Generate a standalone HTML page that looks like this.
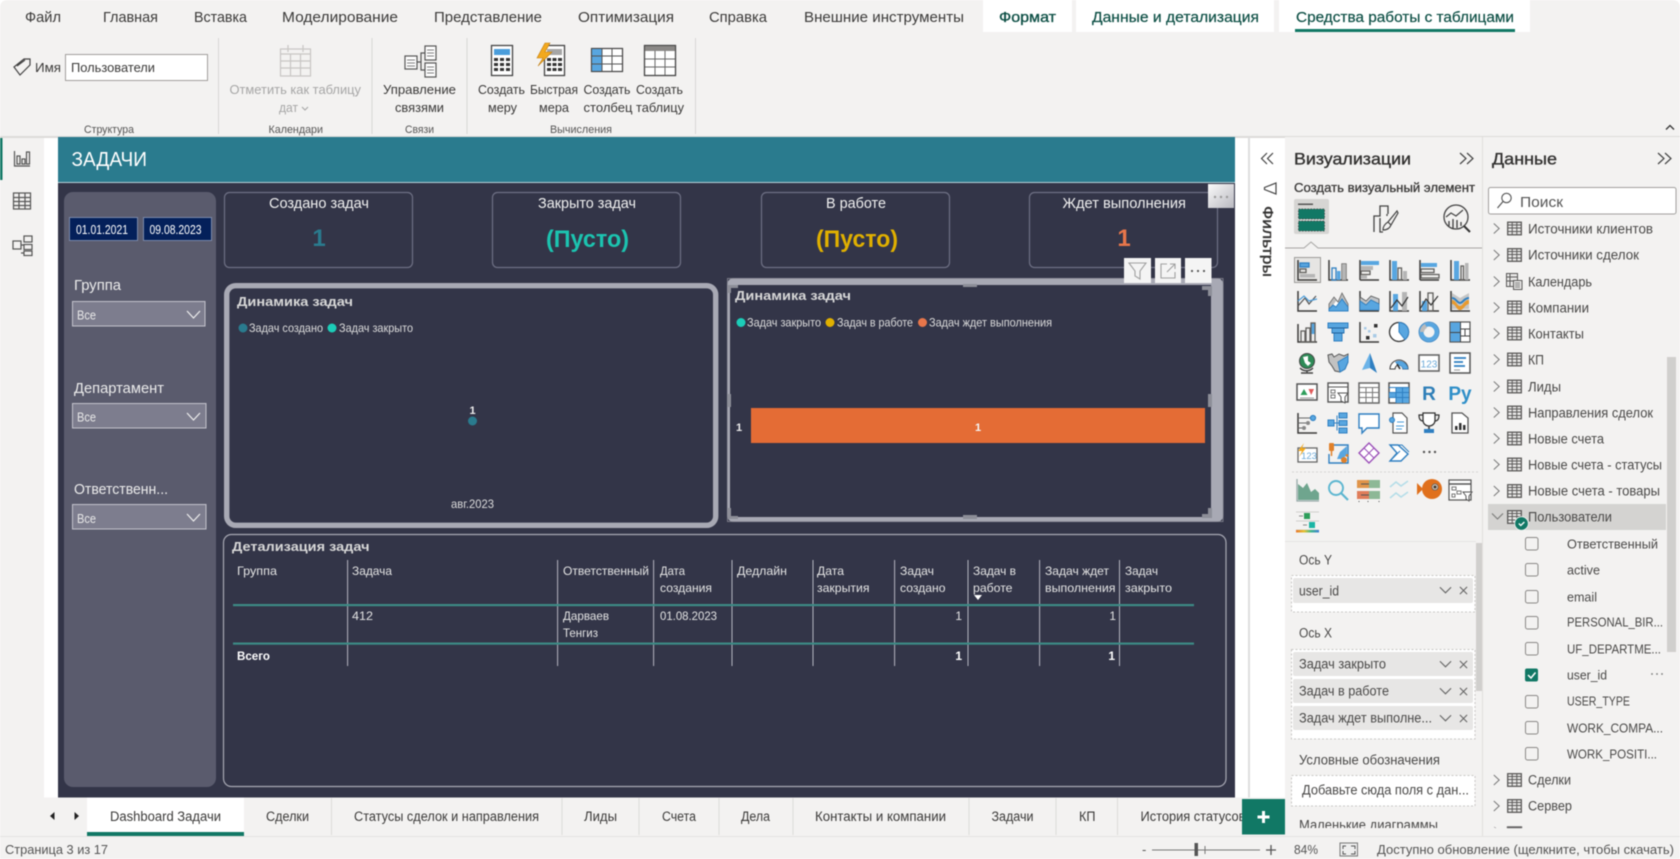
<!DOCTYPE html>
<html lang="ru">
<head>
<meta charset="utf-8">
<title>Power BI</title>
<style>
html,body{margin:0;padding:0;width:1680px;height:859px;overflow:hidden;background:#fff}
svg{display:block;filter:blur(.45px)}
text{font-family:"Liberation Sans","Noto Sans CJK SC",sans-serif;font-size:13px;fill:#323130}
.tab{font-size:15px;fill:#3b3a39}
.tabg{font-size:15px;fill:#0d4f45}
.rb{font-size:13px;fill:#3b3a39;transform:translateY(-.8px)}
.dis{font-size:13px;fill:#a6a6a6;transform:translateY(-.8px)}
.grp{font-size:11px;fill:#555}
.ct{font-size:15px;fill:#f0f0f0}
.lb{font-size:15px;fill:#ececec}
.vs{font-size:13px;fill:#ddd}
.dt{font-size:12.5px;fill:#fff}
.bt{font-size:13px;font-weight:700;fill:#d8d8d8;transform:translateY(-.8px)}
.lg{font-size:12px;fill:#dcdcdc}
.tb{font-size:12px;fill:#e4e4e4;transform:translateY(-.8px)}
.tbb{font-size:12px;font-weight:700;fill:#fff;transform:translateY(-.8px)}
.pg{font-size:13.5px;fill:#3b3a39;transform:translateY(-.8px)}
.st{font-size:13px;fill:#555}
.h{font-size:17px;fill:#323130;stroke:#323130;stroke-width:.35px}
.sub{font-size:13px;fill:#3b3a39;stroke:#3b3a39;stroke-width:.3px}
.l{font-size:13.5px;fill:#4a4948;transform:translateY(-.7px)}
.f{font-size:13px;fill:#4a4948;transform:translateY(-.7px)}
.ic{fill:none;stroke:#605e5c;stroke-width:1.3}
.icd{fill:none;stroke:#3b3a39;stroke-width:1.5}
.bl{fill:#58a6e0}
.bs{fill:none;stroke:#2f7fc1;stroke-width:1.3}
.gr{fill:#b5b5b5}
</style>
</head>
<body>
<svg width="1680" height="859" viewBox="0 0 1680 859" xmlns="http://www.w3.org/2000/svg">
<defs>
<symbol id="tbl" viewBox="0 0 15 14"><rect x=".7" y=".7" width="13.6" height="12.6" fill="#e9e8e7" stroke="#5a5958" stroke-width="1.3"/><path d="M.7 3.5H14.3M.7 6.5H14.3M.7 10H14.3M5.2 .7V13.3M9.8 .7V13.3" stroke="#5a5958" stroke-width="1" fill="none"/></symbol>
<symbol id="chv" viewBox="0 0 10 14"><path d="M2 1.5L8 7L2 12.5" fill="none" stroke="#777" stroke-width="1.1"/></symbol>
<symbol id="down" viewBox="0 0 14 8"><path d="M1 1L7 7L13 1" fill="none" stroke="#666" stroke-width="1.2"/></symbol>
<symbol id="x" viewBox="0 0 10 10"><path d="M1 1L9 9M9 1L1 9" fill="none" stroke="#666" stroke-width="1.2"/></symbol>
</defs>

<rect width="1680" height="859" fill="#fff"/>

<!-- ribbon -->
<path d="M0 8Q0 0 8 0H1672Q1680 0 1680 8V136H0Z" fill="#f3f2f1"/>
<rect x="0" y="136" width="1680" height="2" fill="#dcdbd9"/>
<text class="tab" x="25" y="22" textLength="36" lengthAdjust="spacingAndGlyphs">Файл</text>
<text class="tab" x="103" y="22" textLength="55" lengthAdjust="spacingAndGlyphs">Главная</text>
<text class="tab" x="194" y="22" textLength="53" lengthAdjust="spacingAndGlyphs">Вставка</text>
<text class="tab" x="282" y="22" textLength="116" lengthAdjust="spacingAndGlyphs">Моделирование</text>
<text class="tab" x="434" y="22" textLength="108" lengthAdjust="spacingAndGlyphs">Представление</text>
<text class="tab" x="578" y="22" textLength="96" lengthAdjust="spacingAndGlyphs">Оптимизация</text>
<text class="tab" x="709" y="22" textLength="58" lengthAdjust="spacingAndGlyphs">Справка</text>
<text class="tab" x="804" y="22" textLength="160" lengthAdjust="spacingAndGlyphs">Внешние инструменты</text>
<rect x="983" y="0" width="89" height="32" fill="#fff"/>
<rect x="1076" y="0" width="198" height="32" fill="#fff"/>
<rect x="1279" y="0" width="251" height="32" fill="#fff"/>
<text class="tabg" x="999" y="22" textLength="57" lengthAdjust="spacingAndGlyphs" style="stroke:#0d4f45;stroke-width:.35px">Формат</text>
<text class="tabg" x="1092" y="22" textLength="167" lengthAdjust="spacingAndGlyphs" style="stroke:#0d4f45;stroke-width:.2px">Данные и детализация</text>
<text class="tabg" x="1296" y="22" textLength="218" lengthAdjust="spacingAndGlyphs" style="stroke:#0d4f45;stroke-width:.2px">Средства работы с таблицами</text>
<rect x="1295" y="29" width="220" height="3" fill="#117865"/>
<path d="M1666 129.5L1670 125.5L1674 129.5" fill="none" stroke="#333" stroke-width="1.3"/>

<!-- ribbon seps -->
<path d="M218.5 38V134M372 38V134M467 38V134M695.5 38V134" stroke="#d8d7d5" stroke-width="1"/>

<!-- name -->
<path d="M14 67L24 59H30V65L20 75Z M17 66L25 60" fill="none" stroke="#444" stroke-width="1.2"/>
<text class="rb" x="35" y="73" textLength="26" lengthAdjust="spacingAndGlyphs">Имя</text>
<rect x="65.5" y="54.5" width="142" height="26" fill="#fff" stroke="#a19f9d"/>
<text class="rb" x="71" y="73" textLength="84" lengthAdjust="spacingAndGlyphs">Пользователи</text>
<text class="grp" x="84" y="133" textLength="50" lengthAdjust="spacingAndGlyphs">Структура</text>

<!-- calendar -->
<g fill="none" stroke="#c8c6c4" stroke-width="1.2">
<rect x="280.5" y="49" width="30" height="27"/>
<path d="M280.5 54H310.5M280.5 61H310.5M280.5 68H310.5M290.5 54V76M300.5 54V76M288 45V52M303 45V52"/>
</g>
<text class="dis" x="229.5" y="95" textLength="131.5" lengthAdjust="spacingAndGlyphs">Отметить как таблицу</text>
<text class="dis" x="279" y="113" textLength="19" lengthAdjust="spacingAndGlyphs">дат</text>
<path d="M302 107L305 110L308 107" fill="none" stroke="#a6a6a6" stroke-width="1.1"/>
<text class="grp" x="268.5" y="133" textLength="54.5" lengthAdjust="spacingAndGlyphs">Календари</text>

<!-- relations -->
<g fill="#fff" stroke="#555" stroke-width="1.2">
<rect x="405" y="56" width="12" height="13"/>
<rect x="425" y="46" width="11" height="14"/>
<rect x="425" y="63" width="11" height="14"/>
<path d="M417 62H421V53H425M421 62V70H425" fill="none"/>
<path d="M407 60H415M407 63H415M407 66H415M427 50H434M427 53H434M427 56H434M427 67H434M427 70H434M427 73H434" stroke-width=".8"/>
</g>
<text class="rb" x="383" y="95" textLength="73" lengthAdjust="spacingAndGlyphs">Управление</text>
<text class="rb" x="395" y="113" textLength="49" lengthAdjust="spacingAndGlyphs">связями</text>
<text class="grp" x="405" y="133" textLength="29" lengthAdjust="spacingAndGlyphs">Связи</text>

<!-- calculator icons -->
<rect x="491.5" y="45.5" width="21" height="30" fill="#fff" stroke="#444" stroke-width="1.3"/>
<rect x="494" y="49" width="16" height="6" fill="#4a9ddb"/>
<g fill="#333"><rect x="494" y="58" width="4" height="3"/><rect x="500" y="58" width="4" height="3"/><rect x="506" y="58" width="4" height="3"/><rect x="494" y="63" width="4" height="3"/><rect x="500" y="63" width="4" height="3"/><rect x="506" y="63" width="4" height="3"/><rect x="494" y="68" width="4" height="3"/><rect x="500" y="68" width="4" height="3"/><rect x="506" y="68" width="4" height="3"/></g>
<rect x="544.5" y="45.5" width="20" height="30" fill="#fff" stroke="#444" stroke-width="1.3"/>
<rect x="547" y="49" width="15" height="6" fill="#a6a6a6"/>
<g fill="#333"><rect x="547" y="58" width="4" height="3"/><rect x="552.5" y="58" width="4" height="3"/><rect x="558" y="58" width="4" height="3"/><rect x="547" y="63" width="4" height="3"/><rect x="552.5" y="63" width="4" height="3"/><rect x="558" y="63" width="4" height="3"/><rect x="547" y="68" width="4" height="3"/><rect x="552.5" y="68" width="4" height="3"/><rect x="558" y="68" width="4" height="3"/></g>
<path d="M545 43L537 58H543L538 66L552 52H545L550 43Z" fill="#f2a91e" stroke="#c17d0f" stroke-width=".6"/>
<rect x="591.5" y="48.5" width="31" height="23" fill="#fff" stroke="#444" stroke-width="1.2"/>
<rect x="592" y="49" width="10" height="22" fill="#58a6e0"/>
<path d="M602 49V71M612 49V71M592 56H622M592 64H622" stroke="#555" stroke-width="1" fill="none"/>
<rect x="644.5" y="45.5" width="31" height="30" fill="#fff" stroke="#444" stroke-width="1.3"/>
<rect x="645" y="46" width="30" height="5" fill="#8a8886"/>
<path d="M655 51V75M665 51V75M645 59H675M645 67H675" stroke="#666" stroke-width="1" fill="none"/>

<text class="rb" x="478" y="95" textLength="47" lengthAdjust="spacingAndGlyphs">Создать</text>
<text class="rb" x="488" y="113" textLength="29" lengthAdjust="spacingAndGlyphs">меру</text>
<text class="rb" x="530" y="95" textLength="48" lengthAdjust="spacingAndGlyphs">Быстрая</text>
<text class="rb" x="539" y="113" textLength="30" lengthAdjust="spacingAndGlyphs">мера</text>
<text class="rb" x="583.5" y="95" textLength="47" lengthAdjust="spacingAndGlyphs">Создать</text>
<text class="rb" x="583.5" y="113" textLength="49" lengthAdjust="spacingAndGlyphs">столбец</text>
<text class="rb" x="636" y="95" textLength="47" lengthAdjust="spacingAndGlyphs">Создать</text>
<text class="rb" x="636" y="113" textLength="48" lengthAdjust="spacingAndGlyphs">таблицу</text>
<text class="grp" x="550" y="133" textLength="62" lengthAdjust="spacingAndGlyphs">Вычисления</text>

<!-- left rail -->
<rect x="0" y="138" width="44" height="660" fill="#f3f2f1"/>
<rect x="0" y="138" width="2.5" height="42" fill="#117865"/>
<g fill="none" stroke="#555" stroke-width="1.2">
<path d="M14.5 151V166H30"/><rect x="17" y="156" width="3" height="8"/><rect x="22" y="159" width="3" height="5"/><rect x="26.5" y="152" width="3" height="12"/>
<rect x="13.5" y="193" width="17" height="16"/><path d="M13.5 197.5H30.5M13.5 201.5H30.5M13.5 205.5H30.5M19 193V209M25 193V209"/>
<rect x="13" y="241" width="8" height="8"/><rect x="24" y="236" width="8" height="6"/><rect x="24" y="244.5" width="8" height="5"/><rect x="24" y="251" width="8" height="4.5"/><path d="M21 245H24M21 253H24"/>
</g>

<!-- canvas -->
<rect x="58" y="137" width="1177" height="46" fill="#2a7b8e"/>
<rect x="58" y="182" width="1177" height="1" fill="#b6cfd6"/>
<text x="71.5" y="166" textLength="75.5" lengthAdjust="spacingAndGlyphs" style="font-size:20px;fill:#fff">ЗАДАЧИ</text>
<rect x="58" y="183" width="1177" height="614.5" fill="#333548"/>

<!-- slicer panel -->
<rect x="64" y="192" width="152" height="595" rx="9" fill="#5a5b6d"/>
<rect x="69.5" y="217.5" width="68" height="23" fill="#04205a" stroke="#7a88a8"/>
<rect x="143.5" y="217.5" width="68" height="23" fill="#04205a" stroke="#7a88a8"/>
<text class="dt" x="76" y="234" textLength="52" lengthAdjust="spacingAndGlyphs">01.01.2021</text>
<text class="dt" x="149.5" y="234" textLength="52" lengthAdjust="spacingAndGlyphs">09.08.2023</text>
<text class="lb" x="74" y="290" textLength="47" lengthAdjust="spacingAndGlyphs">Группа</text>
<rect x="72.5" y="301.5" width="132.5" height="24.5" fill="#7d7d8e" stroke="#c3c3cc"/>
<text class="dt" x="77" y="319.5" textLength="19" lengthAdjust="spacingAndGlyphs" style="fill:#e8e8e8">Все</text>
<path d="M187 311L193.5 318L200 311" fill="none" stroke="#eee" stroke-width="1.2"/>
<text class="lb" x="74" y="393" textLength="90" lengthAdjust="spacingAndGlyphs">Департамент</text>
<rect x="72.5" y="403.5" width="133.5" height="24.5" fill="#7d7d8e" stroke="#c3c3cc"/>
<text class="dt" x="77" y="421.5" textLength="19" lengthAdjust="spacingAndGlyphs" style="fill:#e8e8e8">Все</text>
<path d="M187 413L193.5 420L200 413" fill="none" stroke="#eee" stroke-width="1.2"/>
<text class="lb" x="74" y="494" textLength="94" lengthAdjust="spacingAndGlyphs">Ответственн...</text>
<rect x="72.5" y="504.5" width="133.5" height="24.5" fill="#7d7d8e" stroke="#c3c3cc"/>
<text class="dt" x="77" y="523" textLength="19" lengthAdjust="spacingAndGlyphs" style="fill:#e8e8e8">Все</text>
<path d="M187 514L193.5 521L200 514" fill="none" stroke="#eee" stroke-width="1.2"/>

<!-- cards -->
<g fill="#333548" stroke="#6e7084" stroke-width="1.2">
<rect x="224.5" y="192.5" width="188" height="75" rx="5"/>
<rect x="492.5" y="192.5" width="188" height="75" rx="5"/>
<rect x="761.5" y="192.5" width="188" height="75" rx="5"/>
<rect x="1029.5" y="192.5" width="188" height="75" rx="5"/>
</g>
<text class="ct" x="269" y="208" textLength="100" lengthAdjust="spacingAndGlyphs">Создано задач</text>
<text class="ct" x="538" y="208" textLength="98" lengthAdjust="spacingAndGlyphs">Закрыто задач</text>
<text class="ct" x="826" y="208" textLength="60" lengthAdjust="spacingAndGlyphs">В работе</text>
<text class="ct" x="1062.5" y="208" textLength="123.5" lengthAdjust="spacingAndGlyphs">Ждет выполнения</text>
<text x="319" y="246" text-anchor="middle" style="font-size:24px;font-weight:700;fill:#2a7b8e">1</text>
<text x="546" y="247" textLength="83" lengthAdjust="spacingAndGlyphs" style="font-size:24px;font-weight:700;fill:#1cc4b0">(Пусто)</text>
<text x="816" y="247" textLength="82" lengthAdjust="spacingAndGlyphs" style="font-size:24px;font-weight:700;fill:#e0b000">(Пусто)</text>
<text x="1124" y="246" text-anchor="middle" style="font-size:24px;font-weight:700;fill:#e8764a">1</text>

<!-- top-right more -->
<defs><linearGradient id="gm" x1="0" y1="0" x2="1" y2="1"><stop offset="0" stop-color="#fafafa"/><stop offset="1" stop-color="#b9b9c0"/></linearGradient></defs>
<rect x="1208" y="184" width="26" height="24" fill="url(#gm)"/>
<g fill="#999"><circle cx="1215" cy="197" r="1.2"/><circle cx="1221" cy="197" r="1.2"/><circle cx="1227" cy="197" r="1.2"/></g>

<!-- left chart -->
<rect x="226.7" y="285.7" width="489" height="239.6" rx="9" fill="#333548" stroke="#a8a9b4" stroke-width="5.4"/>
<text class="bt" x="237" y="307" textLength="116" lengthAdjust="spacingAndGlyphs">Динамика задач</text>
<circle cx="243" cy="328" r="4.5" fill="#2a7b8e"/>
<text class="lg" x="249" y="332" textLength="74" lengthAdjust="spacingAndGlyphs">Задач создано</text>
<circle cx="332" cy="328" r="4.5" fill="#1ccdb8"/>
<text class="lg" x="339" y="332" textLength="74" lengthAdjust="spacingAndGlyphs">Задач закрыто</text>
<text x="472.5" y="414" text-anchor="middle" style="font-size:11px;font-weight:700;fill:#eee">1</text>
<circle cx="472.5" cy="421" r="4.5" fill="#2a7b8e"/>
<text class="lg" x="451" y="508" textLength="43" lengthAdjust="spacingAndGlyphs">авг.2023</text>

<!-- right chart -->
<rect x="727" y="278" width="496.5" height="244" rx="7" fill="#a8a9b4"/>
<rect x="730" y="285" width="481" height="232" fill="#333548"/>
<rect x="727.5" y="278.5" width="495.5" height="243" fill="none" stroke="#8a8b96" stroke-width=".8"/>
<g fill="#8d8e98">
<rect x="963" y="284" width="14" height="3"/><rect x="963" y="515" width="14" height="4"/>
<rect x="727" y="394" width="4" height="13"/><rect x="1208" y="394" width="4" height="13"/>
<path d="M728 285H738V288H731V293H728ZM1202 286H1212V296H1208V290H1202ZM728 508H731V516H738V519H728ZM1208 508H1212V518H1202V514H1208Z"/>
</g>
<text class="bt" x="735" y="301" textLength="116" lengthAdjust="spacingAndGlyphs">Динамика задач</text>
<circle cx="741" cy="322.5" r="4.5" fill="#1ccdb8"/>
<text class="lg" x="747" y="326.5" textLength="74" lengthAdjust="spacingAndGlyphs">Задач закрыто</text>
<circle cx="830" cy="322.5" r="4.5" fill="#e0b000"/>
<text class="lg" x="837" y="326.5" textLength="76" lengthAdjust="spacingAndGlyphs">Задач в работе</text>
<circle cx="922.5" cy="322.5" r="4.5" fill="#e8764a"/>
<text class="lg" x="929" y="326.5" textLength="123" lengthAdjust="spacingAndGlyphs">Задач ждет выполнения</text>
<rect x="751" y="408" width="454" height="35" fill="#e46c35"/>
<text x="739" y="431" text-anchor="middle" style="font-size:11px;font-weight:700;fill:#eee">1</text>
<text x="978" y="431" text-anchor="middle" style="font-size:11px;font-weight:700;fill:#f5f5f5">1</text>

<!-- visual header -->
<rect x="1124" y="258" width="27" height="25" fill="#f4f4f4"/>
<rect x="1155" y="258" width="26" height="25" fill="#f4f4f4"/>
<rect x="1185" y="258" width="26.5" height="25" fill="#f4f4f4"/>
<path d="M1129 263H1146L1140 271V279L1135 276V271Z" fill="none" stroke="#a0a0a0" stroke-width="1.1"/>
<path d="M1167 264H1161V278H1175V272M1167 272L1175 264M1170 264H1175V269" fill="none" stroke="#a0a0a0" stroke-width="1.1"/>
<g fill="#555"><circle cx="1192" cy="271" r="1.1"/><circle cx="1198" cy="271" r="1.1"/><circle cx="1204" cy="271" r="1.1"/></g>

<!-- table -->
<rect x="223.5" y="534.5" width="1002.5" height="252" rx="8" fill="#333548" stroke="#a8a9b4" stroke-width="1.2"/>
<text class="bt" x="232" y="552" textLength="137.5" lengthAdjust="spacingAndGlyphs">Детализация задач</text>
<path d="M347.6 560V666M557.6 560V666M653.6 560V666M732 560V666M813 560V666M894.6 560V666M968 560V666M1039.6 560V666M1119.5 560V666" stroke="#b5b5c0" stroke-width="1"/>
<rect x="233" y="604" width="961" height="2.2" fill="#3d8a85"/>
<rect x="233" y="642.5" width="961" height="2.2" fill="#3d8a85"/>
<text class="tb" x="237" y="576" textLength="40" lengthAdjust="spacingAndGlyphs">Группа</text>
<text class="tb" x="352" y="576" textLength="40" lengthAdjust="spacingAndGlyphs">Задача</text>
<text class="tb" x="563" y="576" textLength="86" lengthAdjust="spacingAndGlyphs">Ответственный</text>
<text class="tb" x="660" y="576" textLength="25" lengthAdjust="spacingAndGlyphs">Дата</text>
<text class="tb" x="660" y="593" textLength="52" lengthAdjust="spacingAndGlyphs">создания</text>
<text class="tb" x="737" y="576" textLength="50" lengthAdjust="spacingAndGlyphs">Дедлайн</text>
<text class="tb" x="817" y="576" textLength="27" lengthAdjust="spacingAndGlyphs">Дата</text>
<text class="tb" x="817" y="593" textLength="52.5" lengthAdjust="spacingAndGlyphs">закрытия</text>
<text class="tb" x="900" y="576" textLength="34" lengthAdjust="spacingAndGlyphs">Задач</text>
<text class="tb" x="900" y="593" textLength="45.5" lengthAdjust="spacingAndGlyphs">создано</text>
<text class="tb" x="973" y="576" textLength="43" lengthAdjust="spacingAndGlyphs">Задач в</text>
<text class="tb" x="973" y="593" textLength="39.5" lengthAdjust="spacingAndGlyphs">работе</text>
<path d="M974 595H982L978 600Z" fill="#fff"/>
<text class="tb" x="1045" y="576" textLength="64" lengthAdjust="spacingAndGlyphs">Задач ждет</text>
<text class="tb" x="1045" y="593" textLength="70.5" lengthAdjust="spacingAndGlyphs">выполнения</text>
<text class="tb" x="1125" y="576" textLength="33" lengthAdjust="spacingAndGlyphs">Задач</text>
<text class="tb" x="1125" y="593" textLength="47" lengthAdjust="spacingAndGlyphs">закрыто</text>
<text class="tb" x="352" y="621" textLength="21" lengthAdjust="spacingAndGlyphs">412</text>
<text class="tb" x="563" y="621" textLength="46" lengthAdjust="spacingAndGlyphs">Дарваев</text>
<text class="tb" x="563" y="638" textLength="35" lengthAdjust="spacingAndGlyphs">Тенгиз</text>
<text class="tb" x="660" y="621" textLength="57" lengthAdjust="spacingAndGlyphs">01.08.2023</text>
<text class="tb" x="962" y="621" text-anchor="end">1</text>
<text class="tb" x="1116" y="621" text-anchor="end">1</text>
<text class="tbb" x="237" y="661" textLength="33" lengthAdjust="spacingAndGlyphs">Всего</text>
<text class="tbb" x="962" y="661" text-anchor="end">1</text>
<text class="tbb" x="1115" y="661" text-anchor="end">1</text>

<!-- filter pane -->
<rect x="1248" y="137" width="2" height="661" fill="#dedede"/>
<path d="M1267 153L1261.5 158.5L1267 164M1273 153L1267.5 158.5L1273 164" fill="none" stroke="#444" stroke-width="1.2"/>
<path d="M1276 183V194L1264.5 189.5V187.5Z" fill="none" stroke="#444" stroke-width="1.2"/>
<text transform="translate(1263,206) rotate(90)" textLength="71" lengthAdjust="spacingAndGlyphs" style="font-size:15px;fill:#323130;stroke:#323130;stroke-width:.35px">Фильтры</text>

<!-- viz pane -->
<rect x="1285" y="137" width="197" height="699" fill="#f3f2f1"/>
<rect x="1482" y="137" width="1" height="699" fill="#e1dfdd"/>
<text class="h" x="1294" y="164.5" textLength="117" lengthAdjust="spacingAndGlyphs">Визуализации</text>
<path d="M1460 153L1466 158.5L1460 164M1467 153L1473 158.5L1467 164" fill="none" stroke="#444" stroke-width="1.2"/>
<text class="sub" x="1294" y="192" textLength="181" lengthAdjust="spacingAndGlyphs">Создать визуальный элемент</text>
<rect x="1294" y="199" width="35" height="35" rx="2" fill="#d6d5d3"/>
<rect x="1298" y="203.5" width="15" height="1.5" fill="#555"/>
<rect x="1298.5" y="209" width="26" height="10" fill="#117865" stroke="#444" stroke-dasharray="1.5 1.5" stroke-width=".8"/>
<rect x="1298.5" y="221" width="26" height="10" fill="#117865" stroke="#444" stroke-dasharray="1.5 1.5" stroke-width=".8"/>
<!-- format icon -->
<path d="M1374 232V216H1380V206H1388V214M1380 218V232H1383M1387 216V214" fill="none" stroke="#444" stroke-width="1.3"/>
<path d="M1397 211L1388 222L1391 225L1398 213ZM1388 222Q1383 225 1383 230Q1389 230 1391 225" fill="none" stroke="#444" stroke-width="1.2"/>
<!-- analytics icon -->
<circle cx="1456" cy="217" r="12" fill="none" stroke="#444" stroke-width="1.3"/>
<path d="M1446 217L1451 213L1456 216L1463 210" fill="none" stroke="#444" stroke-width="1.2"/>
<path d="M1449 221V226M1453 219V228M1457 220V228M1461 222V226" stroke="#444" stroke-width="1.4"/>
<path d="M1464 226L1470 232" stroke="#333" stroke-width="2"/>
<path d="M1285 248H1304L1311 242L1318 248H1482" fill="#f3f2f1" stroke="#a6a5a3" stroke-width="1"/>

<!-- viz gallery -->
<rect x="1294.5" y="257.5" width="26" height="25" fill="#e6e5e3" stroke="#9c9b99"/>
<!-- row 1 -->
<g transform="translate(1297,260)"><path class="icd" d="M1 0V20H20"/><rect class="bl" x="3" y="3" width="9" height="4"/><rect class="bs" x="3" y="3" width="9" height="4"/><rect class="ic" x="3" y="9" width="6" height="3.5"/><rect class="gr" x="3" y="14" width="15" height="3.5"/></g>
<g transform="translate(1328,260)"><path class="icd" d="M1 0V20H20"/><rect class="bs" x="4" y="8" width="4" height="12"/><rect class="bl" x="9" y="11" width="3.5" height="9"/><rect class="ic" x="14" y="4" width="4" height="16"/><rect class="gr" x="14" y="4" width="4" height="16"/></g>
<g transform="translate(1359,260)"><path class="icd" d="M1 0V20"/><path class="icd" d="M1 20H20"/><rect class="bl" x="2" y="1" width="18" height="4"/><rect class="gr" x="2" y="6" width="12" height="4"/><rect class="ic" x="2" y="11" width="9" height="3.5"/><rect class="gr" x="2" y="15.5" width="6" height="3"/></g>
<g transform="translate(1389,260)"><path class="icd" d="M1 0V20H20"/><rect class="bl" x="3" y="1" width="5" height="19"/><rect class="ic" x="9" y="8" width="3.5" height="12"/><rect class="gr" x="14" y="11" width="4" height="9"/></g>
<g transform="translate(1419,260)"><path class="icd" d="M1 0V20"/><path class="icd" d="M1 20H20"/><rect class="bl" x="2" y="3" width="16" height="4"/><rect class="ic" x="2" y="9" width="13" height="3.5"/><rect class="ic" x="2" y="14.5" width="18" height="3.5"/></g>
<g transform="translate(1450,260)"><path class="icd" d="M1 0V20H20"/><rect class="bl" x="4" y="1" width="5" height="19"/><rect class="ic" x="11" y="6" width="2.5" height="14"/><rect class="gr" x="15" y="3" width="3.5" height="17"/></g>
<!-- row 2 -->
<g transform="translate(1297,291)"><path class="icd" d="M1 0V20H20"/><path d="M1 15L8 7L12 13L19 5" fill="none" stroke="#555" stroke-width="1.2"/><path d="M1 10L7 5L12 10L20 8" fill="none" stroke="#4a9ddb" stroke-width="1.2"/></g>
<g transform="translate(1328,291)"><path d="M1 20V13L6 6L10 11L14 2L20 13V20Z" fill="#bdbdbd" stroke="#666" stroke-width=".8"/><path d="M1 20L8 10L13 14L17 20Z" fill="#fff"/><path d="M1 20H20V16L14 8L8 16L5 14L1 18Z" fill="#58a6e0" stroke="#2f7fc1" stroke-width="1"/></g>
<g transform="translate(1359,291)"><path class="icd" d="M1 0V20H20"/><path d="M1 6L7 10L12 5L20 8V13L12 9L7 14L1 10Z" fill="#bfc3c7" stroke="#555" stroke-width=".8"/><path d="M1 10L7 14L12 9L20 13V19H1Z" fill="#58a6e0" stroke="#2f7fc1" stroke-width=".8"/></g>
<g transform="translate(1389,291)"><path class="icd" d="M1 0V20H20"/><rect class="bl" x="4" y="3" width="5" height="17"/><rect class="gr" x="13" y="1" width="5" height="19"/><path d="M2 17L8 9L13 15L19 6" fill="none" stroke="#333" stroke-width="1.2"/></g>
<g transform="translate(1419,291)"><path class="icd" d="M1 0V20H20"/><rect class="bl" x="3" y="10" width="5" height="10"/><rect class="ic" x="9" y="2" width="5" height="18"/><path d="M1 18L7 8L12 14L19 5" fill="none" stroke="#333" stroke-width="1.2"/></g>
<g transform="translate(1450,291)"><path class="icd" d="M1 0V20H20"/><path d="M2 2L10 7L19 2V18H2Z" fill="#c5c5c5"/><path d="M2 9C6 9 7 15 10 15S14 9 19 9V13C15 13 14 19 10 19S6 13 2 13Z" fill="#e89a2e"/><path d="M2 7C6 7 7 12 10 12S14 7 19 7" fill="none" stroke="#2f7fc1" stroke-width="2"/></g>
<!-- row 3 -->
<g transform="translate(1297,322)"><path class="icd" d="M1 2V20H20"/><rect class="ic" x="4" y="9" width="4" height="11"/><rect class="ic" x="9" y="6" width="4" height="14"/><rect class="bl" x="14" y="1" width="4" height="11"/><rect class="ic" x="14" y="1" width="4" height="19"/></g>
<g transform="translate(1328,322)"><path d="M0 1H20V6H16V11H14V19H6V11H4V6H0Z" fill="#58a6e0" stroke="#2f7fc1" stroke-width="1"/><path d="M1 6H19M4 11H16" stroke="#1f5f99" stroke-width="1"/></g>
<g transform="translate(1359,322)"><path class="icd" d="M1 0V20H20"/><rect x="15" y="2" width="3.5" height="3.5" fill="#333"/><rect x="7" y="14" width="3.5" height="3.5" fill="#333"/><rect x="5" y="5" width="2.5" height="2.5" fill="#a9cbe6"/><rect x="9" y="8" width="2.5" height="2.5" fill="#a9cbe6"/><rect x="14" y="12" width="3.5" height="3.5" fill="#a9cbe6"/></g>
<g transform="translate(1389,322)"><circle cx="10" cy="10" r="9.5" fill="#fff" stroke="#333" stroke-width="1.3"/><path d="M10 10V.5A9.5 9.5 0 0 1 16 17.5Z" fill="#58a6e0" stroke="#2f7fc1"/></g>
<g transform="translate(1419,322)"><circle cx="10" cy="10" r="7.5" fill="none" stroke="#58a6e0" stroke-width="4"/><circle cx="10" cy="10" r="10" fill="none" stroke="#2f7fc1" stroke-width=".8"/><path d="M1 10A9 9 0 0 1 6 2L8 6A5 5 0 0 0 5 10Z" fill="#bbb"/></g>
<g transform="translate(1450,322)"><rect x="0" y="0" width="20" height="20" fill="#fff" stroke="#555" stroke-width="1.2"/><rect x=".5" y=".5" width="10" height="10" fill="#58a6e0"/><rect x=".5" y="10.5" width="10" height="9" fill="#58a6e0"/><path d="M10.5 0V20M0 10.5H10.5M10.5 7H20M10.5 14H20M15 7V14" stroke="#444" fill="none"/></g>
<!-- row 4 -->
<g transform="translate(1297,353)"><circle cx="10" cy="8" r="7.5" fill="#2e8b57" stroke="#444"/><path d="M6 4L11 3V8L14 10L11 13L8 10Z" fill="#fff"/><path d="M3 15A9 9 0 0 0 16 15M10 17V20M4 20H16" fill="none" stroke="#444" stroke-width="1.4"/></g>
<g transform="translate(1328,353)"><path d="M0 2L4 1L6 4L11 1L16 3L20 1V9L17 16L12 19L7 18L4 13L1 9Z" fill="#c2c2c2" stroke="#555"/><path d="M10 9L20 3V9L17 16L12 19Z" fill="#58a6e0" stroke="#2f7fc1"/></g>
<g transform="translate(1359,353)"><path d="M11 0L18 20L11 15Z" fill="#2f7fc1"/><path d="M11 0L3 17L11 15Z" fill="#6bb3e8"/></g>
<g transform="translate(1389,353)"><path d="M1 16A9 9 0 0 1 19 16H14A4 4 0 0 0 6 16Z" fill="#fff" stroke="#444" stroke-width="1.1"/><path d="M6.5 9A9 9 0 0 1 19 16H14A4 4 0 0 0 9.5 12.5Z" fill="#58a6e0" stroke="#2f7fc1" stroke-width=".6"/><path d="M11 16L8 11" stroke="#333" stroke-width="1.6"/></g>
<g transform="translate(1419,353)"><rect x="0" y="2" width="20" height="16" fill="#fff" stroke="#666" stroke-width="1.6"/><text x="10" y="14.5" text-anchor="middle" style="font-size:10px;fill:#6caad8">123</text></g>
<g transform="translate(1450,353)"><rect x="0" y="0" width="20" height="20" fill="#fff" stroke="#555" stroke-width="1.5"/><path d="M4 5H16M4 9H13M4 13H15" stroke="#2f7fc1" stroke-width="1.8"/><path d="M4 17H10" stroke="#999" stroke-width="1"/></g>
<!-- row 5 -->
<g transform="translate(1297,383)"><rect x="0" y="1" width="20" height="16" fill="#fff" stroke="#555" stroke-width="1.5"/><path d="M3.5 12L7 6L10.5 12Z" fill="#2e9e5b"/><path d="M11.5 6H17L14.2 12Z" fill="#e05a5a"/><path d="M3 15H17" stroke="#999"/></g>
<g transform="translate(1328,383)"><rect x="0" y="0" width="20" height="19" fill="#fff" stroke="#555" stroke-width="1.4"/><path d="M0 4H20" stroke="#555"/><rect x="3" y="7" width="4" height="3" fill="none" stroke="#777"/><rect x="3" y="12" width="4" height="3" fill="none" stroke="#777"/><path d="M10 10H20L17 14V20L13 18V14Z" fill="#fff" stroke="#555"/></g>
<g transform="translate(1359,383)"><rect x="0" y="0" width="20" height="20" fill="#fff" stroke="#666" stroke-width="1.5"/><path d="M0 4.5H20M0 9.5H20M0 14.5H20M7 4.5V20M13.5 4.5V20" stroke="#777" fill="none"/></g>
<g transform="translate(1389,383)"><rect x="0" y="0" width="20" height="20" fill="#fff" stroke="#555" stroke-width="1.5"/><rect x="7" y="5" width="13" height="15" fill="#58a6e0"/><rect x="0" y="9" width="20" height="5" fill="#58a6e0"/><path d="M0 4.5H20M0 9.5H20M0 14.5H20M7 4.5V20M13.5 4.5V20" stroke="#2f7fc1" fill="none"/></g>
<text x="1429" y="400" text-anchor="middle" style="font-size:19px;font-weight:700;fill:#2f7fb8">R</text>
<text x="1460" y="400" text-anchor="middle" style="font-size:19px;font-weight:700;fill:#2f8fc8">Py</text>
<!-- row 6 -->
<g transform="translate(1297,413)"><path class="icd" d="M1 0V20H20"/><path d="M1 5H14M1 10H9M1 15H5" stroke="#666" fill="none"/><circle cx="16" cy="5" r="2.6" class="bl" stroke="#2f7fc1"/><circle cx="11" cy="10" r="2" fill="#888"/><circle cx="7" cy="15" r="2" fill="#888"/></g>
<g transform="translate(1328,413)"><rect x="0" y="7" width="6" height="6" class="bl" stroke="#2f7fc1"/><rect x="11" y="0" width="8" height="5" class="bl" stroke="#2f7fc1"/><rect x="11" y="7.5" width="8" height="5" class="bl" stroke="#2f7fc1"/><rect x="11" y="15" width="8" height="5" class="bl" stroke="#2f7fc1"/><path d="M6 10H11M9 2.5V17.5" stroke="#2f7fc1" fill="none"/></g>
<g transform="translate(1359,413)"><path d="M0 1H20V15H8L3 20V15H0Z" fill="#fff" stroke="#2f7fc1" stroke-width="1.4"/></g>
<g transform="translate(1389,413)"><path d="M4 0H13L18 5V20H4Z" fill="#fff" stroke="#555" stroke-width="1.2"/><circle cx="3" cy="7" r="2.5" class="bl" stroke="#2f7fc1"/><path d="M8 9H15M7 13H15M7 16H13" stroke="#4a9ddb"/></g>
<g transform="translate(1419,413)"><path d="M4 0H16V7C16 11 13 13 10 13S4 11 4 7Z" fill="#fff" stroke="#333" stroke-width="1.3"/><path d="M4 2H0C0 7 2 8 4 8M16 2H20C20 7 18 8 16 8" fill="none" stroke="#333" stroke-width="1.2"/><rect x="9" y="13" width="2" height="3" fill="#555"/><rect x="5" y="16" width="10" height="4" fill="#2f7fc1"/></g>
<g transform="translate(1450,413)"><path d="M2 0H12L18 5V20H2Z" fill="#fff" stroke="#555" stroke-width="1.3"/><rect x="5" y="13" width="2.5" height="4" fill="#333"/><rect x="9" y="10" width="2.5" height="7" fill="#333"/><rect x="13" y="12" width="2.5" height="5" fill="#333"/></g>
<!-- row 7 -->
<g transform="translate(1297,443)"><rect x="1" y="5" width="19" height="14" fill="#fff" stroke="#666" stroke-width="1.3"/><text x="12" y="16" text-anchor="middle" style="font-size:9.5px;fill:#6caad8">123</text><path d="M7 0L1 8H5L2 14L9 5H5Z" fill="#f2a91e"/></g>
<g transform="translate(1328,443)"><path d="M4 2H20V20H1V11" fill="none" stroke="#2f7fc1" stroke-width="1.4"/><path d="M9 16L12 9L19 3V12L14 16Z" fill="#58a6e0"/><rect x="1" y="0" width="5" height="8" rx="1" fill="#e0812b"/><path d="M3.5 8V13" stroke="#e0812b" stroke-width="1.5"/><circle cx="16" cy="17" r="3" fill="#e0812b"/><circle cx="19" cy="12.5" r="1.4" fill="#e0812b"/></g>
<g transform="translate(1359,443)"><path d="M10 0L20 10L10 20L0 10Z" fill="#fff" stroke="#9b4fb8" stroke-width="1.4"/><path d="M5 5L15 15M15 5L5 15" stroke="#9b4fb8"/></g>
<g transform="translate(1389,443)"><path d="M1 2H9L19 11L12 18H1L8 10Z" fill="#fff" stroke="#2f7fc1" stroke-width="1.4"/><path d="M9 2H13L20 9M1 18L11 8" stroke="#2f7fc1" fill="none"/></g>
<g fill="#555"><circle cx="1424" cy="452" r="1.2"/><circle cx="1429.5" cy="452" r="1.2"/><circle cx="1435" cy="452" r="1.2"/></g>
<path d="M1292 472H1478" stroke="#d5d4d2" stroke-dasharray="2 2"/>
<!-- custom row -->
<g transform="translate(1296,479)"><path d="M1 0V22H23" fill="none" stroke="#9aa" stroke-width="1.3"/><path d="M2 21V5L7 9L11 4L15 13L19 10L23 14V21Z" fill="#6fa58e"/></g>
<g transform="translate(1327,479)"><circle cx="9" cy="9" r="7" fill="none" stroke="#5cb6d0" stroke-width="1.9"/><path d="M14 14L21 21" stroke="#5cb6d0" stroke-width="2.2"/></g>
<g transform="translate(1357,479)"><rect x="0" y="1" width="23" height="8" fill="#e0954a"/><rect x="12" y="1" width="11" height="8" fill="#8db896"/><rect x="0" y="12" width="23" height="8" fill="#e07d5a"/><rect x="12" y="12" width="11" height="8" fill="#8db896"/><path d="M4 5H12M4 16H12" stroke="#555"/><path d="M2 22V23M11 22V23M22 22V23" stroke="#555"/></g>
<g transform="translate(1389,479)"><path d="M1 8L7 3L12 7L19 2M1 19L7 14L12 18L19 13" fill="none" stroke="#b4dde8" stroke-width="1.5"/></g>
<g transform="translate(1417,479)"><path d="M0 4L6 10L0 16Z" fill="#e0701c"/><ellipse cx="15" cy="10" rx="10" ry="10" fill="#e0701c"/><circle cx="18" cy="8" r="3.2" fill="#c9b9a8" stroke="#555" stroke-width=".6"/><circle cx="18" cy="8" r="1.4" fill="#333"/></g>
<g transform="translate(1449,479)"><rect x="0" y="1" width="22" height="20" fill="#fff" stroke="#555" stroke-width="1.2"/><path d="M0 5H22" stroke="#555" stroke-width="1.5"/><rect x="3" y="8" width="4" height="3" fill="none" stroke="#777"/><rect x="8" y="12" width="4" height="3" fill="none" stroke="#777"/><rect x="3" y="15" width="3" height="3" fill="none" stroke="#777"/><path d="M14 13H23L20 17V22L17 20V17Z" fill="#fff" stroke="#555"/></g>
<g transform="translate(1296,511)"><path d="M0 1H23M0 10H23M0 19H23" stroke="#d0cfcd"/><rect x="8" y="2" width="6" height="6" fill="#2e9e5b"/><rect x="13" y="11" width="6" height="6" fill="#1ab5a5"/><path d="M3 5H7M7 14H11" stroke="#888"/></g>
<defs><linearGradient id="rb" x1="0" x2="1" y1="0" y2="0"><stop offset="0" stop-color="#e8772e"/><stop offset=".35" stop-color="#e8c22e"/><stop offset=".65" stop-color="#3fb98a"/><stop offset="1" stop-color="#3f7fd8"/></linearGradient></defs>
<rect x="1296" y="530" width="23" height="2.5" fill="url(#rb)"/>

<rect x="1285" y="541" width="191" height="1" fill="#e6e5e3"/>
<!-- field wells -->
<text class="l" x="1299" y="565" textLength="33" lengthAdjust="spacingAndGlyphs">Ось Y</text>
<rect x="1291.5" y="575.5" width="183.5" height="36.5" fill="#fff" stroke="#c8c6c4" stroke-dasharray="2 2"/>
<rect x="1293" y="578" width="180" height="25" rx="2" fill="#e7e6e5"/>
<text class="l" x="1299" y="596" textLength="40" lengthAdjust="spacingAndGlyphs">user_id</text>
<use href="#down" x="1439" y="586" width="13" height="8"/>
<use href="#x" x="1459" y="586" width="9" height="9"/>
<text class="l" x="1299" y="638" textLength="33" lengthAdjust="spacingAndGlyphs">Ось X</text>
<rect x="1291.5" y="649.5" width="183.5" height="89.5" fill="#fff" stroke="#c8c6c4" stroke-dasharray="2 2"/>
<rect x="1293" y="652" width="180" height="24" rx="2" fill="#e7e6e5"/>
<rect x="1293" y="679" width="180" height="24" rx="2" fill="#e7e6e5"/>
<rect x="1293" y="706" width="180" height="24" rx="2" fill="#e7e6e5"/>
<text class="l" x="1299" y="669" textLength="87" lengthAdjust="spacingAndGlyphs">Задач закрыто</text>
<text class="l" x="1299" y="696" textLength="90" lengthAdjust="spacingAndGlyphs">Задач в работе</text>
<text class="l" x="1299" y="723" textLength="133" lengthAdjust="spacingAndGlyphs">Задач ждет выполне...</text>
<use href="#down" x="1439" y="660" width="13" height="8"/>
<use href="#x" x="1459" y="660" width="9" height="9"/>
<use href="#down" x="1439" y="687" width="13" height="8"/>
<use href="#x" x="1459" y="687" width="9" height="9"/>
<use href="#down" x="1439" y="714" width="13" height="8"/>
<use href="#x" x="1459" y="714" width="9" height="9"/>
<text class="l" x="1299" y="765" textLength="141" lengthAdjust="spacingAndGlyphs">Условные обозначения</text>
<rect x="1291.5" y="775.5" width="183.5" height="30.5" fill="#fff" stroke="#c8c6c4" stroke-dasharray="2 2"/>
<text class="l" x="1302" y="795" textLength="167" lengthAdjust="spacingAndGlyphs">Добавьте сюда поля с дан...</text>
<text class="l" x="1299" y="830" textLength="139" lengthAdjust="spacingAndGlyphs">Маленькие диаграммы</text>
<rect x="1476" y="543" width="6" height="148" fill="#d0cfcd"/>
<rect x="1285" y="828" width="197" height="8" fill="#f3f2f1"/>

<!-- data pane -->
<rect x="1483" y="137" width="197" height="699" fill="#f3f2f1"/>
<text class="h" x="1492" y="164.5" textLength="65" lengthAdjust="spacingAndGlyphs">Данные</text>
<path d="M1658 153L1664 158.5L1658 164M1665 153L1671 158.5L1665 164" fill="none" stroke="#444" stroke-width="1.2"/>
<rect x="1488.5" y="187.5" width="187.5" height="26.5" rx="2" fill="#fff" stroke="#a19f9d"/>
<circle cx="1506.5" cy="198" r="4.7" fill="none" stroke="#555" stroke-width="1.1"/>
<path d="M1503 201.5L1497.5 208" stroke="#555" stroke-width="1.2"/>
<text x="1520" y="207" textLength="43" lengthAdjust="spacingAndGlyphs" style="font-size:15px;fill:#555">Поиск</text>

<rect x="1488" y="504" width="178" height="26" fill="#d4d3d1"/>
<rect x="1667" y="357" width="9" height="295" fill="#d0cfcd"/>

<use href="#chv" x="1492" y="221.5" width="9" height="14"/><use href="#tbl" x="1507" y="221.5" width="15" height="14"/><text class="l" x="1528" y="234" textLength="125" lengthAdjust="spacingAndGlyphs">Источники клиентов</text>
<use href="#chv" x="1492" y="248" width="9" height="14"/><use href="#tbl" x="1507" y="248" width="15" height="14"/><text class="l" x="1528" y="260" textLength="111" lengthAdjust="spacingAndGlyphs">Источники сделок</text>
<use href="#chv" x="1492" y="274.5" width="9" height="14"/>
<rect x="1506.5" y="273.5" width="11" height="13" fill="#e9e8e7" stroke="#5a5958"/><path d="M1506.5 277H1517.5M1506.5 281H1517.5M1510 273.5V286.5" stroke="#5a5958"/><rect x="1513.5" y="280.5" width="8.5" height="9" fill="#e9e8e7" stroke="#5a5958"/><path d="M1515 283H1520M1515 285H1520M1515 287H1520" stroke="#5a5958" stroke-width=".8"/>
<text class="l" x="1528" y="287" textLength="64" lengthAdjust="spacingAndGlyphs">Календарь</text>
<use href="#chv" x="1492" y="300.5" width="9" height="14"/><use href="#tbl" x="1507" y="300.5" width="15" height="14"/><text class="l" x="1528" y="313" textLength="61" lengthAdjust="spacingAndGlyphs">Компании</text>
<use href="#chv" x="1492" y="326.5" width="9" height="14"/><use href="#tbl" x="1507" y="326.5" width="15" height="14"/><text class="l" x="1528" y="339" textLength="56" lengthAdjust="spacingAndGlyphs">Контакты</text>
<use href="#chv" x="1492" y="352.5" width="9" height="14"/><use href="#tbl" x="1507" y="352.5" width="15" height="14"/><text class="l" x="1528" y="365" textLength="16" lengthAdjust="spacingAndGlyphs">КП</text>
<use href="#chv" x="1492" y="379.5" width="9" height="14"/><use href="#tbl" x="1507" y="379.5" width="15" height="14"/><text class="l" x="1528" y="392" textLength="33" lengthAdjust="spacingAndGlyphs">Лиды</text>
<use href="#chv" x="1492" y="405.5" width="9" height="14"/><use href="#tbl" x="1507" y="405.5" width="15" height="14"/><text class="l" x="1528" y="418" textLength="125" lengthAdjust="spacingAndGlyphs">Направления сделок</text>
<use href="#chv" x="1492" y="431.5" width="9" height="14"/><use href="#tbl" x="1507" y="431.5" width="15" height="14"/><text class="l" x="1528" y="444" textLength="76" lengthAdjust="spacingAndGlyphs">Новые счета</text>
<use href="#chv" x="1492" y="457.5" width="9" height="14"/><use href="#tbl" x="1507" y="457.5" width="15" height="14"/><text class="l" x="1528" y="470" textLength="134" lengthAdjust="spacingAndGlyphs">Новые счета - статусы</text>
<use href="#chv" x="1492" y="484" width="9" height="14"/><use href="#tbl" x="1507" y="484" width="15" height="14"/><text class="l" x="1528" y="496" textLength="132" lengthAdjust="spacingAndGlyphs">Новые счета - товары</text>
<path d="M1492 513.5L1497.5 519L1503 513.5" fill="none" stroke="#777" stroke-width="1.1"/>
<use href="#tbl" x="1507" y="510" width="15" height="14"/>
<text class="l" x="1528" y="522" textLength="84" lengthAdjust="spacingAndGlyphs">Пользователи</text>
<circle cx="1521.5" cy="523.5" r="6.8" fill="#117865" stroke="#f3f2f1" stroke-width=".8"/>
<path d="M1518.8 523.5L1520.8 525.5L1524.4 522" fill="none" stroke="#fff" stroke-width="1.3"/>

<g fill="#f3f2f1" stroke="#8a8886" stroke-width="1">
<rect x="1525.5" y="537.5" width="12.5" height="12.5" rx="2"/>
<rect x="1525.5" y="563.5" width="12.5" height="12.5" rx="2"/>
<rect x="1525.5" y="590.5" width="12.5" height="12.5" rx="2" />
<rect x="1525.5" y="616.5" width="12.5" height="12.5" rx="2"/>
<rect x="1525.5" y="642.5" width="12.5" height="12.5" rx="2"/>
<rect x="1525.5" y="695.5" width="12.5" height="12.5" rx="2"/>
<rect x="1525.5" y="721.5" width="12.5" height="12.5" rx="2"/>
<rect x="1525.5" y="747.5" width="12.5" height="12.5" rx="2"/>
</g>
<rect x="1525" y="668.5" width="13" height="13" rx="2" fill="#117865"/>
<path d="M1528 675L1531 678L1535.5 672.5" fill="none" stroke="#fff" stroke-width="1.5"/>
<text class="f" x="1567" y="549" textLength="91" lengthAdjust="spacingAndGlyphs">Ответственный</text>
<text class="f" x="1567" y="575" textLength="33" lengthAdjust="spacingAndGlyphs">active</text>
<text class="f" x="1567" y="602" textLength="30" lengthAdjust="spacingAndGlyphs">email</text>
<text class="f" x="1567" y="627" textLength="96" lengthAdjust="spacingAndGlyphs">PERSONAL_BIR...</text>
<text class="f" x="1567" y="654" textLength="94" lengthAdjust="spacingAndGlyphs">UF_DEPARTME...</text>
<text class="f" x="1567" y="680" textLength="40" lengthAdjust="spacingAndGlyphs">user_id</text>
<g fill="#777"><circle cx="1652" cy="674" r=".9"/><circle cx="1657" cy="674" r=".9"/><circle cx="1662" cy="674" r=".9"/></g>
<text class="f" x="1567" y="706" textLength="63" lengthAdjust="spacingAndGlyphs">USER_TYPE</text>
<text class="f" x="1567" y="733" textLength="96" lengthAdjust="spacingAndGlyphs">WORK_COMPA...</text>
<text class="f" x="1567" y="759" textLength="90" lengthAdjust="spacingAndGlyphs">WORK_POSITI...</text>
<use href="#chv" x="1492" y="773" width="9" height="14"/><use href="#tbl" x="1507" y="773" width="15" height="14"/><text class="l" x="1528" y="785" textLength="43" lengthAdjust="spacingAndGlyphs">Сделки</text>
<use href="#chv" x="1492" y="799" width="9" height="14"/><use href="#tbl" x="1507" y="799" width="15" height="14"/><text class="l" x="1528" y="811" textLength="44" lengthAdjust="spacingAndGlyphs">Сервер</text>
<path d="M1507 826.5H1522V828H1507ZM1494 827L1496 828" fill="#5a5958" stroke="#777" stroke-width=".5"/>

<!-- tabs strip -->
<rect x="0" y="797.5" width="1285" height="38.5" fill="#f3f2f1"/>
<path d="M50 816L54.5 812V820ZM79 816L74.5 812V820Z" fill="#222"/>
<rect x="87" y="797.5" width="157" height="38.5" fill="#fff"/>
<rect x="87" y="832" width="157" height="4" fill="#117865"/>
<path d="M331.5 798V835M562 798V835M639 798V835M719 798V835M793 798V835M969 798V835M1056 798V835M1117.5 798V835" stroke="#dcdbd9"/>
<text class="pg" x="110" y="822" textLength="111" lengthAdjust="spacingAndGlyphs">Dashboard Задачи</text>
<text class="pg" x="266" y="822" textLength="43" lengthAdjust="spacingAndGlyphs">Сделки</text>
<text class="pg" x="354" y="822" textLength="185" lengthAdjust="spacingAndGlyphs">Статусы сделок и направления</text>
<text class="pg" x="584" y="822" textLength="33" lengthAdjust="spacingAndGlyphs">Лиды</text>
<text class="pg" x="662" y="822" textLength="34" lengthAdjust="spacingAndGlyphs">Счета</text>
<text class="pg" x="741" y="822" textLength="29" lengthAdjust="spacingAndGlyphs">Дела</text>
<text class="pg" x="815" y="822" textLength="131" lengthAdjust="spacingAndGlyphs">Контакты и компании</text>
<text class="pg" x="991.5" y="822" textLength="42" lengthAdjust="spacingAndGlyphs">Задачи</text>
<text class="pg" x="1079" y="822" textLength="16.5" lengthAdjust="spacingAndGlyphs">КП</text>
<text class="pg" x="1140.5" y="822" textLength="105" lengthAdjust="spacingAndGlyphs">История статусов</text>
<rect x="1242" y="799" width="43" height="35.5" fill="#117865"/>
<path d="M1263.5 811V823M1257.5 817H1269.5" stroke="#fff" stroke-width="3"/>

<!-- status -->
<rect x="0" y="836" width="1680" height="23" fill="#f3f2f1"/>
<rect x="0" y="836" width="1680" height="1" fill="#e4e3e1"/>
<text class="st" x="5" y="854" textLength="103" lengthAdjust="spacingAndGlyphs">Страница 3 из 17</text>
<text class="st" x="1142" y="854">-</text>
<path d="M1152 850H1260" stroke="#777" stroke-width="1"/>
<rect x="1194.5" y="843" width="3.5" height="13" fill="#555"/>
<path d="M1205 846V854" stroke="#777"/>
<path d="M1271 845V855M1266 850H1276" stroke="#555" stroke-width="1.3"/>
<text class="st" x="1294" y="854" textLength="24" lengthAdjust="spacingAndGlyphs">84%</text>
<rect x="1340" y="843" width="17.5" height="13" fill="#eee" stroke="#777"/>
<path d="M1343 849V846H1346M1351 846H1355V849M1355 851V854H1351M1346 854H1343V851" fill="none" stroke="#555"/>
<text class="st" x="1377" y="854" textLength="297" lengthAdjust="spacingAndGlyphs">Доступно обновление (щелкните, чтобы скачать)</text>
</svg>
</body>
</html>
